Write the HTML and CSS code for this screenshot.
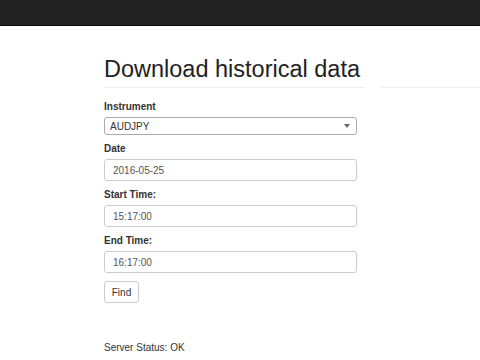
FILE: index.html
```html
<!DOCTYPE html>
<html>
<head>
<meta charset="utf-8">
<link rel="stylesheet" href="styles.css">
</head>
<body>
<div class="navbar"></div>
<div class="page">
  <div class="main">
    <h1 class="title">Download historical data</h1>
    <form class="form">
      <div class="group">
        <label class="label">Instrument</label>
        <div class="select">
          <span>AUDJPY</span>
          <svg class="caret" width="6" height="4" viewBox="0 0 6 4"><path d="M0 0H6L3 4Z" fill="#666"/></svg>
        </div>
      </div>
      <div class="group">
        <label class="label">Date</label>
        <div class="input">2016-05-25</div>
      </div>
      <div class="group">
        <label class="label">Start Time:</label>
        <div class="input">15:17:00</div>
      </div>
      <div class="group">
        <label class="label">End Time:</label>
        <div class="input">16:17:00</div>
      </div>
      <button type="button" class="btn">Find</button>
    </form>
    <p class="status">Server Status: OK</p>
  </div>
  <div class="side"><div class="side-line"></div></div>
</div>
</body>
</html>
```
FILE: styles.css
```css
html, body {
  margin: 0;
  padding: 0;
  background: #fff;
  font-family: "Liberation Sans", Arial, sans-serif;
  color: #333;
}
.navbar {
  height: 25px;
  background: #222;
  border-bottom: 1px solid #080808;
}
.page {
  display: flex;
  padding-left: 104px;
}
.main {
  width: 261px;
}
.side {
  flex: 1;
  margin-left: 16px;
}
.side-line {
  margin-top: 61px;
  border-bottom: 1px solid #eee;
}
.title {
  margin: 30px 0 0 0;
  padding-bottom: 5px;
  font-size: 23.5px;
  font-weight: 400;
  line-height: 26px;
  white-space: nowrap;
  border-bottom: 1px solid #eee;
  color: #222;
}
.form {
  width: 253px;
  margin-top: 13px;
}
.group {
  margin-bottom: 8px;
}
.label {
  display: block;
  font-size: 10px;
  font-weight: bold;
  line-height: 12px;
  margin-bottom: 4px;
  color: #333;
}
.select, .input {
  box-sizing: border-box;
  border: 1px solid #ccc;
  border-radius: 3px;
  font-size: 10px;
  color: #555;
  display: flex;
  align-items: center;
  padding: 0 8px;
}
.select {
  height: 18px;
  justify-content: space-between;
  padding-left: 5px;
  padding-right: 6px;
  color: #333;
  border-color: #aaa;
}
.input {
  height: 22px;
}
.btn {
  display: block;
  box-sizing: border-box;
  width: 35px;
  height: 22px;
  margin-top: 1px;
  padding: 0;
  border: 1px solid #ccc;
  border-radius: 3px;
  background: #fff;
  font-family: "Liberation Sans", Arial, sans-serif;
  font-size: 10px;
  color: #333;
}
.status {
  margin: 39px 0 0 0;
  font-size: 10px;
  line-height: 12px;
  color: #333;
}
```
